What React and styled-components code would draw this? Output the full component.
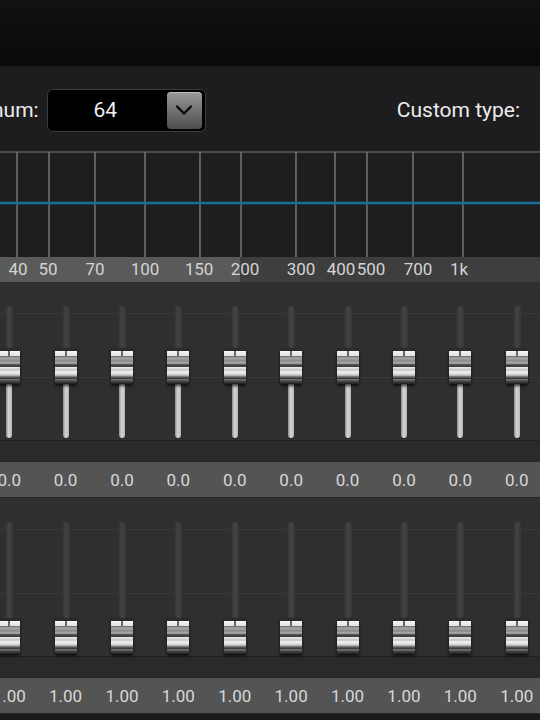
import React from 'react';
import styled, { createGlobalStyle } from 'styled-components';

const GlobalStyle = createGlobalStyle`
  html, body {
    margin: 0;
    padding: 0;
    background: #1a1a1a;
  }
  body {
    width: 540px;
    height: 720px;
    overflow: hidden;
    font-family: Roboto, "Noto Sans", "Liberation Sans", sans-serif;
  }
`;

const Screen = styled.div`
  width: 540px;
  height: 720px;
  overflow: hidden;
  display: flex;
  flex-direction: column;
  background: #1a1a1a;
`;

const TopBar = styled.div`
  height: 66px;
  flex-shrink: 0;
  background: linear-gradient(#111, #0a0a0a);
`;

const Toolbar = styled.div`
  height: 84px;
  flex-shrink: 0;
  display: flex;
  align-items: center;
  background: #1d1d1f;
  color: #ececec;
  font-size: 21px;
  white-space: nowrap;
`;

const ClippedLabel = styled.span`
  margin-left: -8px;
  margin-right: 8px;
  margin-top: 4px;
`;

const Select = styled.div`
  width: 159px;
  height: 43px;
  box-sizing: border-box;
  margin-top: 4px;
  display: flex;
  align-items: center;
  background: #000;
  border: 1.5px solid #3c3c3c;
  border-radius: 6px;
  padding: 0 3px 0 0;
`;

const SelectValue = styled.span`
  flex: 1;
  text-align: center;
  font-size: 21px;
  color: #f0f0f0;
  padding-right: 4px;
`;

const SelectButton = styled.div`
  width: 35px;
  height: 37px;
  border-radius: 4px;
  display: flex;
  align-items: center;
  justify-content: center;
  background: linear-gradient(#9a9a9a, #6e6e6e 55%, #4e4e4e);
  box-shadow: inset 0 1px 0 rgba(255, 255, 255, 0.35);
`;

const RightLabel = styled.span`
  margin-left: auto;
  margin-right: 20px;
  margin-top: 4px;
`;

const Graph = styled.div`
  height: 107px;
  flex-shrink: 0;
  background: #1e1e20;
`;

const LabelStrip = styled.div`
  position: relative;
  height: 25px;
  flex-shrink: 0;
  background: linear-gradient(to right, #5a5a5a 0, #5a5a5a 240px, #3e3e3e 240px);
  color: #d4d4d4;
  font-size: 17px;
`;

const FreqLabel = styled.span`
  position: absolute;
  top: 2px;
  transform: translateX(-50%);
`;

const Block = styled.div`
  height: 216px;
  flex-shrink: 0;
  display: flex;
  flex-direction: column;
  background: #262626;
`;

const SliderArea = styled.div`
  height: 158px;
  flex-shrink: 0;
  display: flex;
  margin-left: -19px;
  background:
    linear-gradient(#393939, #393939) 0 31px / 100% 1px no-repeat,
    linear-gradient(#393939, #393939) 0 95px / 100% 1px no-repeat,
    #2f2f2f;
  border-bottom: 1px solid #202020;
`;

const Column = styled.div`
  width: 56.4px;
  flex-shrink: 0;
  display: flex;
  justify-content: center;
`;

const Track = styled.div`
  position: relative;
  width: 8px;
  height: 132px;
  margin-top: 24px;
`;

const TrackPart = styled.div`
  position: absolute;
  left: ${p => (p.$lit ? 1 : 0)}px;
  right: ${p => (p.$lit ? 1 : 0)}px;
  border-radius: 4px;
  background: ${p =>
    p.$lit
      ? 'linear-gradient(to right, #8c8c8c, #d6d6d6 45%, #b4b4b4)'
      : 'linear-gradient(to right, #303030, #444 50%, #363636)'};
`;

const Knob = styled.div`
  position: absolute;
  left: 50%;
  width: 22px;
  height: 36px;
  margin-left: -11px;
  border-radius: 2px;
  box-shadow: 0 2px 3px rgba(0, 0, 0, 0.7);
  background:
    linear-gradient(to right, transparent 10px, #666 10px, #666 12px, transparent 12px) 0 3px / 100% 5px no-repeat,
    linear-gradient(
      #2a2a2a 0,
      #2a2a2a 3px,
      #f6f6f6 3px,
      #e2e2e2 8px,
      #666 8px,
      #a8a8a8 10px,
      #888 13px,
      #b0b0b0 15px,
      #404040 17px,
      #404040 19px,
      #ececec 19px,
      #c6c6c6 22px,
      #f4f4f4 24px,
      #cccccc 27px,
      #606060 29px,
      #2c2c2c 31px,
      #7a7a7a 31px,
      #3a3a3a 34px,
      #1e1e1e 36px
    );
`;

const Gap = styled.div`
  height: 21px;
  flex-shrink: 0;
  background: #2a2a2a;
`;

const ValueStrip = styled.div`
  height: 35px;
  flex-shrink: 0;
  display: flex;
  align-items: center;
  margin-left: -19px;
  background: #545454;
  color: #d8d8d8;
  font-size: 17px;
`;

const Value = styled.span`
  width: 56.4px;
  flex-shrink: 0;
  text-align: center;
`;

const gridX = [17, 49, 95, 145, 200, 241, 296, 335, 367, 413, 463];

const labels = [
  ['40', 18], ['50', 48], ['70', 95], ['100', 145], ['150', 199], ['200', 245],
  ['300', 301], ['400', 341], ['500', 371], ['700', 418], ['1k', 459],
];

const COLS = 10;
const TRACK = 132;
const KNOB = 36;

function Chevron() {
  return (
    <svg width="18" height="12" viewBox="0 0 18 12">
      <path d="M2 2.5 L9 9.5 L16 2.5" fill="none" stroke="#0a0a0a" strokeWidth="2.4" strokeLinecap="round" strokeLinejoin="round" />
    </svg>
  );
}

function FreqGraph() {
  return (
    <Graph>
      <svg width="540" height="107" viewBox="0 0 540 107">
        <line x1="0" y1="2" x2="540" y2="2" stroke="#7a7a7a" strokeWidth="1.2" />
        {gridX.map(x => (
          <line key={x} x1={x} y1="2" x2={x} y2="107" stroke="#8a8a8a" strokeWidth="1.2" />
        ))}
        <line x1="0" y1="53" x2="540" y2="53" stroke="#17709a" strokeWidth="2.6" />
      </svg>
    </Graph>
  );
}

function SliderBlock({ level, format }) {
  const top = Math.round((1 - level) * (TRACK - KNOB));
  return (
    <Block>
      <SliderArea>
        {Array.from({ length: COLS }).map((_, i) => (
          <Column key={i}>
            <Track>
              <TrackPart style={{ top: 0, height: top + 4 }} />
              <TrackPart $lit style={{ top: top + KNOB - 4, bottom: 0 }} />
              <Knob style={{ top }} />
            </Track>
          </Column>
        ))}
      </SliderArea>
      <Gap />
      <ValueStrip>
        {Array.from({ length: COLS }).map((_, i) => (
          <Value key={i}>{format}</Value>
        ))}
      </ValueStrip>
    </Block>
  );
}

export default function App() {
  return (
    <>
      <GlobalStyle />
      <Screen>
        <TopBar />
        <Toolbar>
          <ClippedLabel>num:</ClippedLabel>
          <Select>
            <SelectValue>64</SelectValue>
            <SelectButton>
              <Chevron />
            </SelectButton>
          </Select>
          <RightLabel>Custom type:</RightLabel>
        </Toolbar>
        <FreqGraph />
        <LabelStrip>
          {labels.map(([t, x]) => (
            <FreqLabel key={t} style={{ left: x }}>{t}</FreqLabel>
          ))}
        </LabelStrip>
        <SliderBlock level={0.56} format="0.0" />
        <SliderBlock level={0} format="1.00" />
      </Screen>
    </>
  );
}
